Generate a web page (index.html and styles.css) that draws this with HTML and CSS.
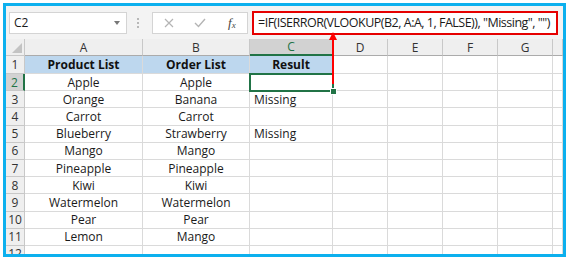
FILE: index.html
```html
<!DOCTYPE html>
<html lang="en">
<head>
    <meta charset="UTF-8">
    <title>Missing values</title>
    <link rel="stylesheet" href="styles.css">
</head>
<body>
    <div class="frame">
        <div class="formula-bar">
            <div class="name-box"><span>C2</span><span class="caret"></span></div>
            <div class="grip"><i></i><i></i><i></i></div>
            <div class="fx-box">
                <svg class="ico" width="10" height="10" viewBox="0 0 10 10"><path d="M1 1 L9 9 M9 1 L1 9" stroke="#b4b4b4" stroke-width="1.2" fill="none"/></svg>
                <svg class="ico" width="12" height="10" viewBox="0 0 12 10"><path d="M1 5 L4.5 8.5 L11 1" stroke="#b4b4b4" stroke-width="1.4" fill="none"/></svg>
                <span class="fx">f<sub>x</sub></span>
            </div>
            <div class="formula">=IF(ISERROR(VLOOKUP(B2, A:A, 1, FALSE)), "Missing", "")</div>
        </div>

        <div class="sheet">
            <div class="corner"><span class="tri"></span></div>
            <div class="ch">A</div><div class="ch">B</div><div class="ch active">C</div><div class="ch">D</div><div class="ch">E</div><div class="ch">F</div><div class="ch">G</div><div class="ch"></div>

            <div class="rh">1</div><div class="c ctr hd">Product List</div><div class="c ctr hd">Order List</div><div class="c ctr hd">Result</div><div class="c"></div><div class="c"></div><div class="c"></div><div class="c"></div><div class="c"></div>
            <div class="rh active">2</div><div class="c ctr">Apple</div><div class="c ctr">Apple</div><div class="c"></div><div class="c"></div><div class="c"></div><div class="c"></div><div class="c"></div><div class="c"></div>
            <div class="rh">3</div><div class="c ctr">Orange</div><div class="c ctr">Banana</div><div class="c">Missing</div><div class="c"></div><div class="c"></div><div class="c"></div><div class="c"></div><div class="c"></div>
            <div class="rh">4</div><div class="c ctr">Carrot</div><div class="c ctr">Carrot</div><div class="c"></div><div class="c"></div><div class="c"></div><div class="c"></div><div class="c"></div><div class="c"></div>
            <div class="rh">5</div><div class="c ctr">Blueberry</div><div class="c ctr">Strawberry</div><div class="c">Missing</div><div class="c"></div><div class="c"></div><div class="c"></div><div class="c"></div><div class="c"></div>
            <div class="rh">6</div><div class="c ctr">Mango</div><div class="c ctr">Mango</div><div class="c"></div><div class="c"></div><div class="c"></div><div class="c"></div><div class="c"></div><div class="c"></div>
            <div class="rh">7</div><div class="c ctr">Pineapple</div><div class="c ctr">Pineapple</div><div class="c"></div><div class="c"></div><div class="c"></div><div class="c"></div><div class="c"></div><div class="c"></div>
            <div class="rh">8</div><div class="c ctr">Kiwi</div><div class="c ctr">Kiwi</div><div class="c"></div><div class="c"></div><div class="c"></div><div class="c"></div><div class="c"></div><div class="c"></div>
            <div class="rh">9</div><div class="c ctr">Watermelon</div><div class="c ctr">Watermelon</div><div class="c"></div><div class="c"></div><div class="c"></div><div class="c"></div><div class="c"></div><div class="c"></div>
            <div class="rh">10</div><div class="c ctr">Pear</div><div class="c ctr">Pear</div><div class="c"></div><div class="c"></div><div class="c"></div><div class="c"></div><div class="c"></div><div class="c"></div>
            <div class="rh">11</div><div class="c ctr">Lemon</div><div class="c ctr">Mango</div><div class="c"></div><div class="c"></div><div class="c"></div><div class="c"></div><div class="c"></div><div class="c"></div>
            <div class="rh">12</div><div class="c"></div><div class="c"></div><div class="c"></div><div class="c"></div><div class="c"></div><div class="c"></div><div class="c"></div><div class="c"></div>

            <!-- cellule active C2 -->
            <div class="selection"><span class="handle"></span></div>
        </div>

        <svg class="arrow" width="10" height="52" viewBox="0 0 10 52">
            <polygon points="1,8 5,0 9,8" fill="#f00"/>
            <line x1="5" y1="6" x2="5" y2="52" stroke="#f00" stroke-width="2"/>
        </svg>
    </div>
</body>
</html>
```

FILE: styles.css
```css
body {
    margin: 0;
    background: #fff;
    font-family: "Open Sans", Arial, sans-serif;
    color: #1a1a1a;
}
.frame {
    position: relative;
    box-sizing: border-box;
    width: 563px;
    height: 254px;
    margin: 3px 0 0 3px;
    border: 3px solid #0cb0ee;
    background: #f3f3f3;
    overflow: hidden;
}

/* barre de formule */
.formula-bar {
    display: flex;
    align-items: center;
    height: 33px;
    padding-left: 3px;
}
.name-box {
    box-sizing: border-box;
    display: flex;
    align-items: center;
    justify-content: space-between;
    width: 118px;
    height: 22px;
    padding: 0 6px 0 4px;
    background: #fff;
    border: 1px solid #d4d4d4;
    font-size: 12px;
}
.caret {
    border-left: 3.5px solid transparent;
    border-right: 3.5px solid transparent;
    border-top: 4px solid #777;
}
.grip {
    display: flex;
    flex-direction: column;
    gap: 2px;
    margin: 0 0 0 10px;
    width: 15px;
}
.grip i {
    width: 2px;
    height: 2px;
    background: #b8b8b8;
}
.fx-box {
    box-sizing: border-box;
    display: flex;
    align-items: center;
    width: 96px;
    height: 22px;
    padding: 0 0 0 11px;
    gap: 20px;
    background: #fff;
    border: 1px solid #d4d4d4;
}
.fx-box .ico {
    display: block;
}
.fx {
    font-family: "Liberation Serif", serif;
    font-style: italic;
    font-size: 13px;
    color: #444;
    margin-left: 2px;
}
.fx sub {
    font-size: 9px;
    vertical-align: -1px;
}
.formula {
    box-sizing: border-box;
    display: flex;
    align-items: center;
    margin-left: 4px;
    width: 306px;
    height: 24px;
    padding-left: 4px;
    background: #fff;
    border: 2px solid #e60000;
    font-size: 12.5px;
    letter-spacing: -0.5px;
    white-space: nowrap;
    overflow: hidden;
}

/* feuille */
.sheet {
    position: relative;
    display: grid;
    grid-template-columns: 19px 118px 107px 83px 55px 55px 55px 55px 1fr;
    grid-template-rows: 17px 18px repeat(11, 17.2px);
    background: #fff;
    font-size: 12px;
}
.corner, .ch, .rh {
    box-sizing: border-box;
    background: #efefef;
    color: #333;
    border-right: 1px solid #c8c8c8;
    border-bottom: 1px solid #c8c8c8;
}
.corner {
    position: relative;
}
.tri {
    position: absolute;
    right: 2px;
    bottom: 2px;
    border-left: 10px solid transparent;
    border-bottom: 10px solid #c3c3c3;
}
.ch {
    display: flex;
    align-items: center;
    justify-content: center;
    border-bottom-color: #ababab;
}
.ch.active {
    background: #d2d2d2;
    color: #217346;
    border-bottom: 2px solid #217346;
}
.rh {
    display: flex;
    align-items: center;
    justify-content: center;
}
.rh.active {
    background: #d2d2d2;
    color: #217346;
    border-right: 2px solid #217346;
}
.c {
    box-sizing: border-box;
    display: flex;
    align-items: center;
    padding: 0 4px;
    border-right: 1px solid #dadada;
    border-bottom: 1px solid #dadada;
    white-space: nowrap;
    overflow: hidden;
}
.c.ctr {
    justify-content: center;
}
.c.hd {
    background: #bdd7ee;
    font-weight: bold;
    color: #111;
}
.selection {
    position: absolute;
    left: 243px;
    top: 34px;
    width: 85px;
    height: 19px;
    box-sizing: border-box;
    border: 2px solid #217346;
}
.handle {
    position: absolute;
    right: -5px;
    bottom: -5px;
    width: 5px;
    height: 5px;
    background: #217346;
    border: 1px solid #fff;
}
.arrow {
    position: absolute;
    left: 322px;
    top: 26px;
}
```
